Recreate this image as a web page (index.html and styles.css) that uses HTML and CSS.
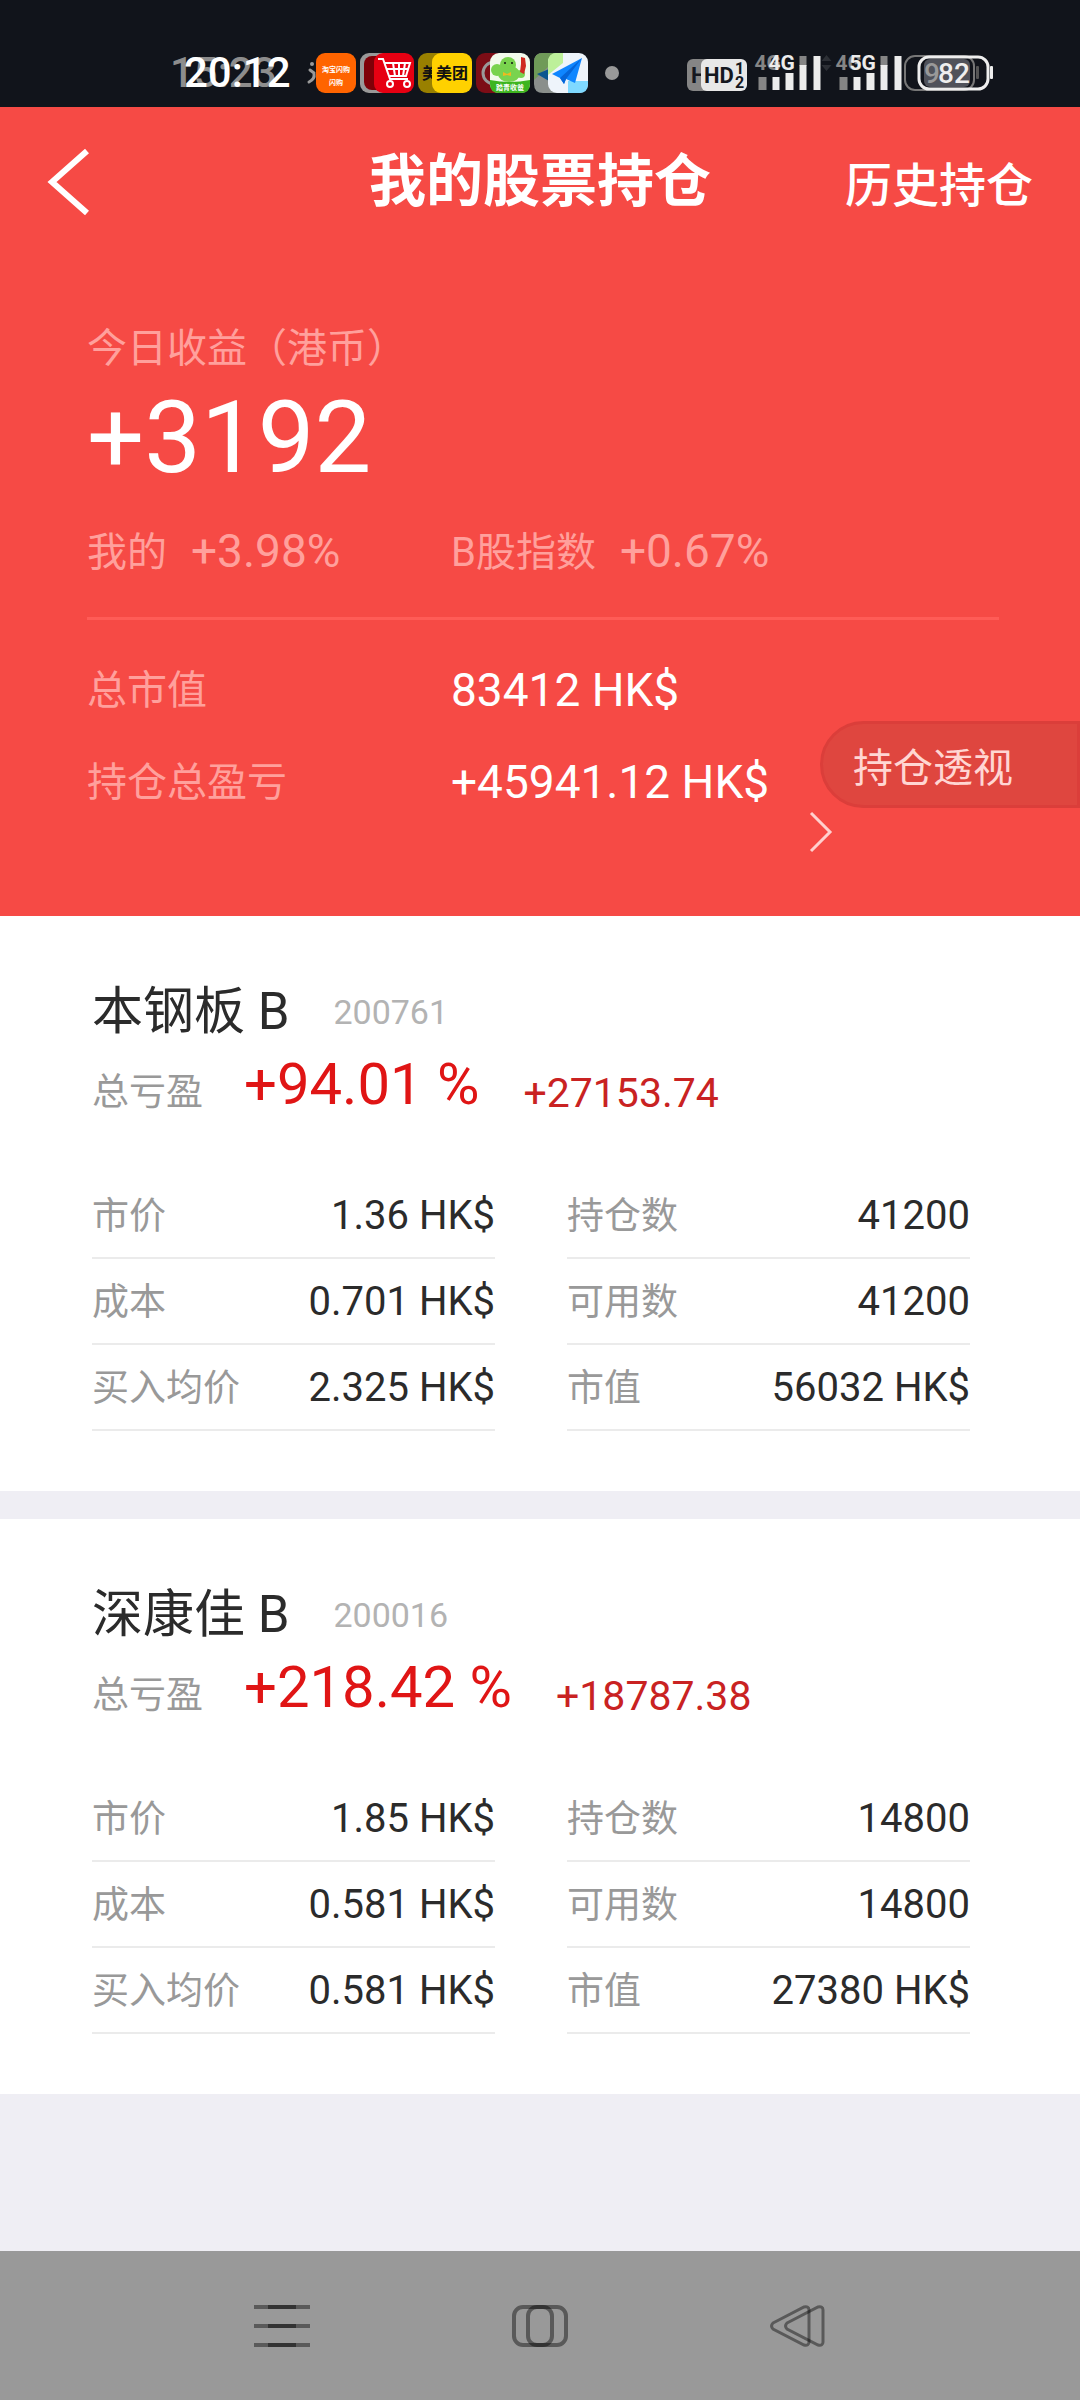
FILE: index.html
```html
<!DOCTYPE html>
<html lang="zh-CN">
<head>
<meta charset="utf-8">
<meta name="viewport" content="width=device-width, initial-scale=1">
<title>我的股票持仓</title>
<link rel="stylesheet" href="styles.css">
</head>
<body>
<div class="screen">
  <div class="status">
    <div class="clock"><span class="clock-old">15:23</span><span class="clock-now">20:12</span></div>
    <div class="apps">
      <svg class="app" viewBox="0 0 54 40">
        <g fill="none" stroke="#999" stroke-width="3" stroke-linecap="round"><path d="M8 17l4 3M12 21q1 5-5 8"/></g><circle cx="10" cy="11" r="2" fill="#999"/>
        <rect x="14" width="40" height="40" rx="9" fill="#ff6400"/>
        <text x="34" y="19" class="app-text tiny" fill="#fff">淘宝闪购</text>
        <text x="34" y="32" class="app-text tiny" fill="#fff">闪购</text>
      </svg>
      <svg class="app" viewBox="0 0 54 40">
        <rect width="40" height="40" rx="9" fill="#999"/>
        <rect x="4" y="3" width="36" height="34" rx="8" fill="#800008"/>
        <rect x="14" width="40" height="40" rx="9" fill="#e60012"/>
        <g fill="none" stroke="#fff" stroke-width="2"><path d="M18 6h5l7 20h18M25 10h25l-4 13H29M27 16h21M33 10l2 13M39 10v13M45 10l-2 13"/><circle cx="30" cy="31" r="3"/><circle cx="47" cy="31" r="3"/></g>
      </svg>
      <svg class="app" viewBox="0 0 54 40">
        <rect width="40" height="40" rx="9" fill="#998000"/>
        <text x="12" y="26" class="app-text big" fill="#111">美</text>
        <rect x="14" width="40" height="40" rx="9" fill="#ffd100"/>
        <text x="34" y="26" class="app-text big" fill="#111">美团</text>
      </svg>
      <svg class="app" viewBox="0 0 54 40">
        <rect width="40" height="40" rx="9" fill="#7c0d16"/>
        <circle cx="18" cy="20" r="11" fill="none" stroke="#999" stroke-width="3"/>
        <rect x="14" width="40" height="40" rx="9" fill="#f2faec"/>
        <path d="M14 27q20 4 40 0v4q0 9-9 9H23q-9 0-9-9z" fill="#3db51f"/>
        <g fill="#79d34e"><circle cx="32" cy="12" r="8"/><circle cx="21" cy="17" r="6"/><circle cx="45" cy="21" r="4"/><ellipse cx="33" cy="21" rx="11" ry="8"/></g>
        <path d="M45 4l4 1 1 8-2 8-4-2 1-8z" fill="#cf2a20"/>
        <circle cx="29" cy="10" r="1" fill="#111"/><circle cx="36" cy="10" r="1" fill="#111"/>
        <path d="M27 19l4 2 4-2v4l-4-1-4 1z" fill="#f0b91f"/>
        <text x="34" y="37" class="app-text tiny" fill="#fff">踏青收爸</text>
      </svg>
      <svg class="app" viewBox="0 0 54 40">
        <path d="M9 0h20v40H9q-9 0-9-9V9q0-9 9-9z" fill="#8a8f8c"/>
        <path d="M9 0h20L0 27V9q0-9 9-9z" fill="#6f9a58"/>
        <path d="M3 21l12-5v12z" fill="#0a558f"/>
        <rect x="14" width="40" height="40" rx="9" fill="#eef4fb"/>
        <path d="M23 0h6v10L14 22V9q0-9 9-9z" fill="#bdf09a"/>
        <path d="M34 28h20v3q0 9-9 9H34z" fill="#7fd9ff"/>
        <path d="M48 5L18 21l8 4 4 6 2-5 9 4z" fill="#0f86ff"/><path d="M48 5L26 25l4 6 2-5z" fill="#0565d8"/>
      </svg>
      <i class="dot"></i>
    </div>
    <div class="radios">
      <svg class="hd" viewBox="0 0 60 32">
        <rect width="46" height="32" rx="6" fill="#858585"/>
        <text x="4" y="24" class="radio-text hd-text" fill="#15181f">H</text>
        <rect x="14" width="46" height="32" rx="6" fill="#e8e8e8"/>
        <text x="17" y="24" class="radio-text hd-text" fill="#15181f">HD</text>
        <text x="48" y="15" class="radio-text sub" fill="#15181f">1</text>
        <text x="48" y="29" class="radio-text sub" fill="#15181f">2</text>
      </svg>
      <svg class="signal" viewBox="0 0 80 40">
        <text x="0" y="17" class="radio-text gen" fill="#858585">4G</text>
        <path d="M4 24h8v13H4zM45 3h7v10h-7z" fill="#858585"/>
        <path d="M18 24h7v13h-7zM31 20h8v17h-8zM45 12h7v25h-7zM59 3h7v34h-7z" fill="#ececec"/>
        <text x="14" y="17" class="radio-text gen" fill="#ececec">4G</text>
        <path d="M67 8l5-6 5 6zM67 12h10l-5 6z" fill="#2c2f35"/>
      </svg>
      <svg class="signal" viewBox="0 0 80 40">
        <text x="0" y="17" class="radio-text gen" fill="#858585">4G</text>
        <path d="M4 24h8v13H4zM45 3h7v10h-7z" fill="#858585"/>
        <path d="M18 24h7v13h-7zM31 20h8v17h-8zM45 12h7v25h-7zM59 3h7v34h-7z" fill="#ececec"/>
        <text x="14" y="17" class="radio-text gen" fill="#ececec">5G</text>
      </svg>
      <svg class="battery" viewBox="0 0 90 36">
        <rect x="20" y="4" width="46" height="28" rx="6" fill="#50525a"/>
        <rect x="1" y="1" width="69" height="34" rx="10" fill="none" stroke="#777" stroke-width="2"/>
        <rect x="72" y="11" width="3" height="13" rx="1" fill="#555"/>
        <rect x="15" y="2" width="69" height="32" rx="10" fill="none" stroke="#eee" stroke-width="3"/>
        <rect x="86" y="11" width="3" height="13" rx="1" fill="#eee"/>
        <text x="20" y="28" class="radio-text level" fill="#999">9</text>
        <text x="34" y="28" class="radio-text level" fill="#eee">82</text>
      </svg>
    </div>
  </div>

  <header class="bar">
    <button class="back" aria-label="返回"><svg viewBox="0 0 44 68"><path d="M40 3L5 34l35 31" fill="none" stroke="#fff" stroke-width="6"/></svg></button>
    <h1>我的股票持仓</h1>
    <a class="history" href="#">历史持仓</a>
  </header>

  <section class="summary">
    <p class="label">今日收益（港币）</p>
    <p class="gain">+3192</p>
    <div class="pair rates">
      <div class="rate"><span>我的</span><span class="num">+3.98%</span></div>
      <div class="rate"><span>B股指数</span><span class="num">+0.67%</span></div>
    </div>
    <div class="pair total"><span class="label">总市值</span><span class="num">83412 HK$</span></div>
    <div class="pair total"><span class="label">持仓总盈亏</span><span class="num">+45941.12 HK$</span></div>
    <svg class="more" viewBox="0 0 24 40"><path d="M2 1l19 19L2 39" fill="none" stroke="#ffd0ce" stroke-width="3"/></svg>
    <button class="lens">持仓透视</button>
  </section>

  <main class="holdings">
    <article class="card">
      <h2>本钢板 B <small>200761</small></h2>
      <p class="profit"><span class="key">总亏盈</span><span class="percent">+94.01 %</span><span class="amount">+27153.74</span></p>
      <dl class="facts">
        <div><dt>市价</dt><dd>1.36 HK$</dd></div><div><dt>持仓数</dt><dd>41200</dd></div>
        <div><dt>成本</dt><dd>0.701 HK$</dd></div><div><dt>可用数</dt><dd>41200</dd></div>
        <div><dt>买入均价</dt><dd>2.325 HK$</dd></div><div><dt>市值</dt><dd>56032 HK$</dd></div>
      </dl>
    </article>
    <article class="card">
      <h2>深康佳 B <small>200016</small></h2>
      <p class="profit"><span class="key">总亏盈</span><span class="percent">+218.42 %</span><span class="amount">+18787.38</span></p>
      <dl class="facts">
        <div><dt>市价</dt><dd>1.85 HK$</dd></div><div><dt>持仓数</dt><dd>14800</dd></div>
        <div><dt>成本</dt><dd>0.581 HK$</dd></div><div><dt>可用数</dt><dd>14800</dd></div>
        <div><dt>买入均价</dt><dd>0.581 HK$</dd></div><div><dt>市值</dt><dd>27380 HK$</dd></div>
      </dl>
    </article>
  </main>

  <nav class="keys">
    <button aria-label="最近任务"><svg viewBox="0 0 56 42"><path d="M0 2h56M0 21h56M0 40h56" stroke="#5a5a5a" stroke-width="4"/><path d="M14 2h28M14 21h28M14 40h28" stroke="#333" stroke-width="4"/></svg></button>
    <button aria-label="主页"><svg viewBox="0 0 56 42"><g fill="none" stroke="#000" stroke-opacity=".42" stroke-width="4"><rect x="2" y="2" width="38" height="38" rx="9"/><rect x="16" y="2" width="38" height="38" rx="9"/></g></svg></button>
    <button aria-label="返回上一页"><svg viewBox="0 0 56 42"><g fill="none" stroke="#000" stroke-opacity=".42" stroke-width="3"><path d="M3 18L34 2q5-1 5 3v32q0 4-5 3L3 24q-3-3 0-6z"/><path d="M17 18L48 2q5-1 5 3v32q0 4-5 3L17 24q-3-3 0-6z"/></g></svg></button>
  </nav>
</div>
</body>
</html>
```
FILE: styles.css
```css
* { box-sizing: border-box; margin: 0; padding: 0; }
body { font-family: Roboto, "Noto Sans CJK SC", sans-serif; background: #efeef4; color: #2b2b2b; }
button { background: none; border: 0; font: inherit; color: inherit; }
a { color: inherit; text-decoration: none; }
svg { display: block; overflow: visible; }
.screen { min-height: 100vh; display: flex; flex-direction: column; }

.status { height: 107px; background: #11141b; display: flex; align-items: flex-start; padding: 38px 86px 0 170px; }
.clock { display: grid; width: 132px; font-size: 42px; line-height: 70px; font-weight: 500; }
.clock span { grid-area: 1 / 1; }
.clock-old { color: #8d8d8d; }
.clock-now { color: #fff; padding-left: 14px; }
.apps { display: flex; gap: 4px; align-items: center; padding-top: 15px; }
.app { width: 54px; height: 40px; }
.dot { width: 14px; height: 14px; border-radius: 50%; background: #999; margin-left: 13px; }
.app-text { font-family: "Noto Sans CJK SC", sans-serif; font-weight: 700; text-anchor: middle; }
.tiny { font-size: 7px; }
.big { font-size: 16px; }
.radios { margin-left: auto; display: flex; padding-top: 15px; }
.radio-text { font-family: Roboto, sans-serif; font-weight: 700; }
.hd { width: 60px; height: 32px; margin: 6px 7px 0 0; }
.hd-text { font-size: 22px; }
.sub { font-size: 16px; }
.gen { font-size: 21px; }
.level { font-size: 28px; font-weight: 500; }
.signal { width: 81px; height: 40px; }
.signal + .battery { margin-left: -12px; }
.battery { width: 90px; height: 36px; margin-top: 2px; }

.bar { background: #f64a45; color: #fff; height: 153px; display: grid; grid-template-columns: 1fr auto 1fr; align-items: center; padding: 0 47px 4px; }
.back { justify-self: start; }
.back svg { width: 44px; height: 68px; }
.bar h1 { font-size: 57px; line-height: 80px; font-weight: 700; }
.history { justify-self: end; font-size: 47px; font-weight: 500; }

.summary { position: relative; background: #f64a45; color: #fff; min-height: 656px; padding: 60px 81px 0 87px; }
.label, .rates { color: #ffa09c; font-size: 40px; line-height: 58px; }
.gain { font-size: 101px; line-height: 120px; }
.num { font-size: 46px; line-height: 58px; padding-bottom: 3px; }
.pair { display: grid; grid-template-columns: 364px 1fr; align-items: center; }
.rates { padding: 24px 0 34px; margin-bottom: 25px; border-bottom: 3px solid #ff5c57; }
.rate { display: flex; gap: 24px; align-items: center; }
.total { height: 92px; }
.more { position: absolute; left: 809px; top: 552px; width: 24px; height: 40px; }
.lens { position: absolute; right: 0; top: 461px; height: 87px; padding: 0 64px 0 30px; border: 3px solid #db3e3a; border-radius: 44px 0 0 44px; background: #df463f; color: #ffd6d3; font-size: 40px; }

.holdings { display: flex; flex-direction: column; gap: 28px; flex: 1; }
.card { background: #fff; padding: 58px 110px 60px 92px; }
.card h2 { font-size: 51px; line-height: 76px; font-weight: 400; display: flex; gap: 44px; align-items: center; }
.card small { font-size: 34px; color: #b3b3b3; }
.profit { display: flex; align-items: center; height: 86px; line-height: 60px; margin-bottom: 37px; }
.key { width: 152px; font-size: 37px; color: #999; }
.percent { font-size: 58px; color: #e01515; margin-right: 44px; padding-bottom: 18px; }
.amount { font-size: 41px; color: #c92222; }
.facts { display: grid; grid-template-columns: 1fr 1fr; column-gap: 72px; }
.facts div { height: 86px; display: flex; justify-content: space-between; align-items: center; border-bottom: 2px solid #ebebeb; }
.facts dt { font-size: 37px; color: #999; padding-bottom: 4px; }
.facts dd { font-size: 40px; }

.keys { height: 149px; background: #999; display: flex; justify-content: center; gap: 202px; align-items: center; }
.keys svg { width: 56px; height: 42px; }
```
